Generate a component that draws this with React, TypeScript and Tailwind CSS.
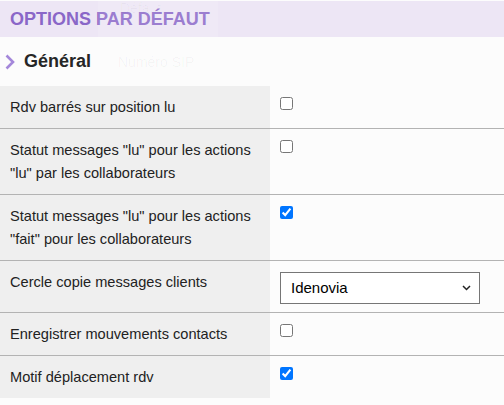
import React from "react";

const rows: { label: string; kind: "check" | "select"; checked?: boolean }[] = [
  { label: "Rdv barrés sur position lu", kind: "check", checked: false },
  { label: 'Statut messages "lu" pour les actions "lu" par les collaborateurs', kind: "check", checked: false },
  { label: 'Statut messages "lu" pour les actions "fait" pour les collaborateurs', kind: "check", checked: true },
  { label: "Cercle copie messages clients", kind: "select" },
  { label: "Enregistrer mouvements contacts", kind: "check", checked: false },
  { label: "Motif déplacement rdv", kind: "check", checked: true },
];

export default function App() {
  return (
    <div
      className="relative w-[504px] h-[405px] bg-[#fcfcfc] overflow-hidden text-[#222]"
      style={{ fontFamily: '"Liberation Sans", Arial, sans-serif' }}
    >
      <div className="mt-px h-[36px] bg-[#ede6f5] flex items-center pl-[10px]">
        <span className="text-[18px] font-bold text-[#8a67c8] leading-none">OPTIONS PAR DÉFAUT</span>
      </div>
      <div className="h-[49px] flex items-center pl-[5px] gap-[9px]">
        <svg width="10" height="16" viewBox="0 0 10 16">
          <path d="M1.5 1.5 L8 8 L1.5 14.5" fill="none" stroke="#a487da" strokeWidth="2.6" />
        </svg>
        <span className="text-[18px] font-bold text-[#262626]">Général</span>
      </div>
      <div className="flex flex-col">
        {rows.map((r, i) => (
          <div
            key={i}
            className={`flex ${i < rows.length - 1 ? "border-b border-[#b3b3b3]" : ""}`}
          >
            <div className="w-[270px] shrink-0 bg-[#efefef] pl-[10px] pr-[12px] pt-[10px] pb-[9px] text-[14.6px] leading-[23px]">
              {r.label}
            </div>
            <div className="flex-1 pl-[10px] pt-[11px] pb-[8px]">
              {r.kind === "check" ? (
                <input type="checkbox" defaultChecked={r.checked} className="m-0 w-[13px] h-[13px] block" />
              ) : (
                <div className="relative w-[200px]">
                  <select className="appearance-none block w-[200px] h-[32px] border border-[#767676] bg-white text-[15px] pl-[10px] pr-[20px] text-black">
                    <option>Idenovia</option>
                  </select>
                  <svg className="absolute right-[9px] top-[13px]" width="9" height="6" viewBox="0 0 9 6">
                    <path d="M1 1 L4.5 4.5 L8 1" fill="none" stroke="#222" strokeWidth="1.5" />
                  </svg>
                </div>
              )}
            </div>
          </div>
        ))}
      </div>
      <div className="absolute left-[98px] top-0 w-[120px] h-[82px] bg-white/15">
        <div className="pl-[22px] pt-[0px] text-[14px] leading-[16px] text-black/[0.03]">Défaut</div>
        <div className="pl-[20px] pt-[36px] text-[14px] text-black/[0.04]">Numéro SIP</div>
      </div>
    </div>
  );
}
